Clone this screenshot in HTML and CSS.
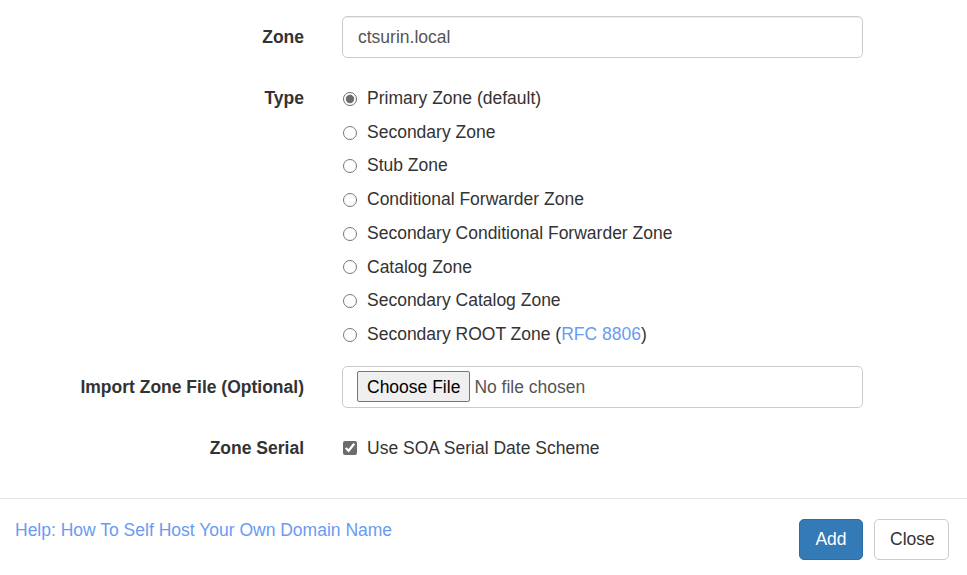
FILE: index.html
```html
<!DOCTYPE html>
<html lang="en">
<head>
<meta charset="utf-8">
<title>Add Zone</title>
<link rel="stylesheet" href="styles.css">
</head>
<body>
<div class="modal">
  <form class="modal-body">
    <div class="row row-zone">
      <label class="row-label" for="zone">Zone</label>
      <div class="control">
        <input class="text-input" id="zone" type="text" value="ctsurin.local">
      </div>
    </div>
    <div class="row row-type">
      <div class="row-label label-type">Type</div>
      <div class="control radio-list">
        <label class="option"><input type="radio" name="type" checked>Primary Zone (default)</label>
        <label class="option"><input type="radio" name="type">Secondary Zone</label>
        <label class="option"><input type="radio" name="type">Stub Zone</label>
        <label class="option"><input type="radio" name="type">Conditional Forwarder Zone</label>
        <label class="option"><input type="radio" name="type">Secondary Conditional Forwarder Zone</label>
        <label class="option"><input type="radio" name="type">Catalog Zone</label>
        <label class="option"><input type="radio" name="type">Secondary Catalog Zone</label>
        <label class="option"><input type="radio" name="type">Secondary ROOT Zone (<a class="link" href="#">RFC 8806</a>)</label>
      </div>
    </div>
    <div class="row row-file">
      <label class="row-label" for="file">Import Zone File (Optional)</label>
      <div class="control">
        <div class="file-box"><input class="file-input" id="file" type="file"></div>
      </div>
    </div>
    <div class="row row-serial">
      <div class="row-label">Zone Serial</div>
      <div class="control">
        <label class="option"><input type="checkbox" checked>Use SOA Serial Date Scheme</label>
      </div>
    </div>
  </form>
  <div class="modal-footer">
    <a class="link help" href="#">Help: How To Self Host Your Own Domain Name</a>
    <div class="actions">
      <button class="btn btn-primary" type="button">Add</button>
      <button class="btn btn-default" type="button">Close</button>
    </div>
  </div>
</div>
</body>
</html>
```

FILE: styles.css
```css
* { box-sizing: border-box; }
html, body {
  margin: 0;
  padding: 0;
  background: #fff;
}
body {
  font-family: "Liberation Sans", Arial, sans-serif;
  font-size: 17.5px;
  line-height: 24px;
  color: #333;
  width: 967px;
  height: 575px;
  overflow: hidden;
}
.modal-body {
  padding: 16px 0 38px 0;
  margin: 0;
  border-bottom: 1px solid #e5e5e5;
}
.row {
  display: grid;
  grid-template-columns: 304px 521px;
  column-gap: 38px;
  align-items: start;
}
.row-label {
  text-align: right;
  font-weight: bold;
}
.row-zone .row-label { padding-top: 9px; }
.row-type { margin-top: 24px; }
.label-type { padding-top: 4px; }
.row-file { margin-top: 14px; }
.row-file .row-label { padding-top: 9px; }
.row-serial { margin-top: 28px; }

.text-input {
  display: block;
  width: 100%;
  height: 42px;
  padding: 0 15px;
  border: 1px solid #ccc;
  border-radius: 5px;
  font: inherit;
  color: #555;
  box-shadow: inset 0 1px 1px rgba(0,0,0,0.075);
}
.radio-list {
  display: flex;
  flex-direction: column;
}
.radio-list .option {
  height: 33.71px;
  line-height: 33.71px;
}
.option {
  display: flex;
  align-items: center;
  white-space: pre;
}
.option input {
  width: 14px;
  height: 14px;
  margin: 0 10px 0 1px;
  accent-color: #6c6c6c;
  flex: none;
}
.link {
  color: #6a9bf4;
  text-decoration: none;
}
.file-box {
  height: 42px;
  border: 1px solid #ccc;
  border-radius: 5px;
  padding: 6px 14px;
  display: flex;
  align-items: center;
}
.file-input {
  font: inherit;
  font-size: 17.5px;
  color: #555;
}
.file-input::file-selector-button {
  font: inherit;
  color: #000;
  height: 31px;
  padding: 0 9px;
  margin-right: 4px;
  border: 1px solid #767676;
  border-radius: 2px;
  background: #efefef;
}
.modal-footer {
  display: flex;
  justify-content: space-between;
  align-items: flex-start;
  padding: 19px 18px 0 15px;
}
.help {
  line-height: 24px;
}
.actions {
  display: flex;
  gap: 11px;
  margin-top: 1px;
}
.btn {
  height: 41px;
  padding: 0 15px;
  font: inherit;
  border-radius: 5px;
  border: 1px solid transparent;
}
.btn-primary {
  background: #337ab7;
  border-color: #2e6da4;
  color: #fff;
  width: 64px;
}
.btn-default {
  background: #fff;
  border-color: #ccc;
  color: #333;
  width: 75px;
}
```
